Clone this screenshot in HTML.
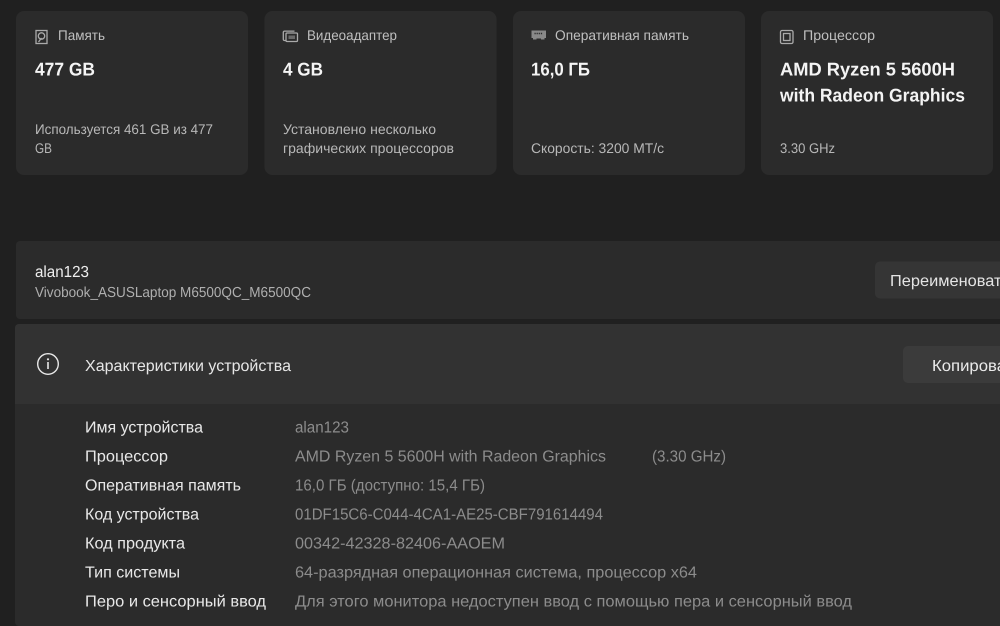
<!DOCTYPE html>
<html lang="ru">
<head>
<meta charset="utf-8">
<title>Характеристики устройства</title>
<style>
html,body{margin:0;padding:0;width:1000px;height:626px;overflow:hidden;background:#202020}
svg{display:block;filter:blur(.35px)}
text{font-family:"Liberation Sans",sans-serif;font-size:14px;text-rendering:geometricPrecision}
.t{fill:#bfbfbf;font-size:14px}
.b{fill:#f4f4f4;font-size:18.5px;font-weight:700}
.s{fill:#b8b8b8;font-size:14px}
.l{fill:#e8e8e8;font-size:16px}
.v{fill:#8c8c8c;font-size:16px}
.ic{fill:none;stroke:#aaaaaa;stroke-width:1.3}
</style>
</head>
<body>
<svg width="1000" height="626" viewBox="0 0 1000 626" xmlns="http://www.w3.org/2000/svg">
<rect width="1000" height="626" fill="#202020"/>

<!-- Cards -->
<rect x="16" y="11" width="232" height="164" rx="8" fill="#2b2b2b"/>
<rect x="264.500" y="11" width="232" height="164" rx="8" fill="#2b2b2b"/>
<rect x="513" y="11" width="232" height="164" rx="8" fill="#2b2b2b"/>
<rect x="761" y="11" width="232" height="164" rx="8" fill="#2b2b2b"/>

<!-- Storage icon -->
<g class="ic">
<rect x="36" y="30.500" width="11" height="13"/>
<circle cx="41.500" cy="36" r="3.200"/>
<path d="M38.500 42l3-4"/>
</g>
<text class="t" x="58" y="40" textLength="47" lengthAdjust="spacingAndGlyphs">Память</text>
<text class="b" x="35" y="75.500" textLength="60" lengthAdjust="spacingAndGlyphs">477 GB</text>
<text class="s" x="35" y="134" textLength="178" lengthAdjust="spacingAndGlyphs">Используется 461 GB из 477</text>
<text class="s" x="35" y="153" textLength="17" lengthAdjust="spacingAndGlyphs">GB</text>

<!-- GPU icon -->
<g class="ic">
<path d="M285.500 40.500h-1a1.200 1.200 0 0 1-1.200-1.200v-7a1.200 1.200 0 0 1 1.200-1.200h10"/>
<rect x="286" y="33" width="11.500" height="8.500" rx="1"/>
<rect x="288.500" y="35.500" width="6.500" height="3.500" fill="#aaaaaa" stroke="none" opacity=".5"/>
</g>
<text class="t" x="307" y="40" textLength="90" lengthAdjust="spacingAndGlyphs">Видеоадаптер</text>
<text class="b" x="283" y="75.500" textLength="40" lengthAdjust="spacingAndGlyphs">4 GB</text>
<text class="s" x="283" y="134" textLength="153" lengthAdjust="spacingAndGlyphs">Установлено несколько</text>
<text class="s" x="283" y="153" textLength="171" lengthAdjust="spacingAndGlyphs">графических процессоров</text>

<!-- RAM icon -->
<path d="M531.500 30.500h14.500v7.500h-1.500v1.500h-3.500v-1h-4.500v1h-3.500v-1.500h-1.500z" fill="#aaaaaa" opacity=".75"/>
<path d="M534.500 33.500h8.500" stroke="#2b2b2b" stroke-width="1.500" stroke-dasharray="1.200 .9" fill="none"/>
<text class="t" x="555" y="40" textLength="134" lengthAdjust="spacingAndGlyphs">Оперативная память</text>
<text class="b" x="531" y="75.500" textLength="59" lengthAdjust="spacingAndGlyphs">16,0 ГБ</text>
<text class="s" x="531" y="153" textLength="133" lengthAdjust="spacingAndGlyphs">Скорость: 3200 MT/с</text>

<!-- CPU icon -->
<g class="ic">
<rect x="780.500" y="30.500" width="12.500" height="13" rx="1.500"/>
<rect x="783.500" y="33.500" width="6.500" height="7"/>
</g>
<text class="t" x="803" y="40" textLength="72" lengthAdjust="spacingAndGlyphs">Процессор</text>
<text class="b" x="780" y="75.500" textLength="175" lengthAdjust="spacingAndGlyphs">AMD Ryzen 5 5600H</text>
<text class="b" x="780" y="101.500" textLength="185" lengthAdjust="spacingAndGlyphs">with Radeon Graphics</text>
<text class="s" x="780" y="153" textLength="55" lengthAdjust="spacingAndGlyphs">3.30 GHz</text>

<!-- Device name bar -->
<rect x="16" y="241" width="1000" height="78" rx="4" fill="#2b2b2b"/>
<text x="35" y="277" fill="#eeeeee" style="font-size:16px" textLength="54" lengthAdjust="spacingAndGlyphs">alan123</text>
<text x="35" y="297" fill="#afafaf" style="font-size:14.500px" textLength="276" lengthAdjust="spacingAndGlyphs">Vivobook_ASUSLaptop M6500QC_M6500QC</text>
<rect x="875" y="261.500" width="140" height="37" rx="5" fill="#353535"/>
<text x="890" y="286" fill="#e4e4e4" style="font-size:16px" textLength="120" lengthAdjust="spacingAndGlyphs">Переименовать</text>

<!-- Spec header -->
<rect x="15" y="324" width="1000" height="302" rx="4" fill="#2b2b2b"/>
<path d="M15 404v-76a4 4 0 0 1 4-4h981v80z" fill="#323232"/>
<circle cx="48" cy="364" r="10.300" fill="none" stroke="#e8e8e8" stroke-width="1.400"/>
<rect x="47.200" y="362" width="1.600" height="7" fill="#e8e8e8"/>
<circle cx="48" cy="359.300" r="1.100" fill="#e8e8e8"/>
<text x="85" y="371" fill="#e6e6e6" style="font-size:16px" textLength="206" lengthAdjust="spacingAndGlyphs">Характеристики устройства</text>
<rect x="903" y="346" width="120" height="37" rx="5" fill="#3b3b3b"/>
<text x="932" y="371" fill="#eaeaea" style="font-size:16px" textLength="90" lengthAdjust="spacingAndGlyphs">Копировать</text>

<!-- Spec rows -->
<text class="l" x="85" y="432.500" textLength="118" lengthAdjust="spacingAndGlyphs">Имя устройства</text>
<text class="v" x="295" y="432.500" textLength="54" lengthAdjust="spacingAndGlyphs">alan123</text>

<text class="l" x="85" y="461.500" textLength="83" lengthAdjust="spacingAndGlyphs">Процессор</text>
<text class="v" x="295" y="461.500" textLength="311" lengthAdjust="spacingAndGlyphs">AMD Ryzen 5 5600H with Radeon Graphics</text>
<text class="v" x="652" y="461.500" textLength="74" lengthAdjust="spacingAndGlyphs">(3.30 GHz)</text>

<text class="l" x="85" y="490.500" textLength="156" lengthAdjust="spacingAndGlyphs">Оперативная память</text>
<text class="v" x="295" y="490.500" textLength="190" lengthAdjust="spacingAndGlyphs">16,0 ГБ (доступно: 15,4 ГБ)</text>

<text class="l" x="85" y="519.500" textLength="114" lengthAdjust="spacingAndGlyphs">Код устройства</text>
<text class="v" x="295" y="519.500" textLength="308" lengthAdjust="spacingAndGlyphs">01DF15C6-C044-4CA1-AE25-CBF791614494</text>

<text class="l" x="85" y="548.500" textLength="100" lengthAdjust="spacingAndGlyphs">Код продукта</text>
<text class="v" x="295" y="548.500" textLength="210" lengthAdjust="spacingAndGlyphs">00342-42328-82406-AAOEM</text>

<text class="l" x="85" y="577.500" textLength="95" lengthAdjust="spacingAndGlyphs">Тип системы</text>
<text class="v" x="295" y="577.500" textLength="402" lengthAdjust="spacingAndGlyphs">64-разрядная операционная система, процессор x64</text>

<text class="l" x="85" y="606.500" textLength="181" lengthAdjust="spacingAndGlyphs">Перо и сенсорный ввод</text>
<text class="v" x="295" y="606.500" textLength="557" lengthAdjust="spacingAndGlyphs">Для этого монитора недоступен ввод с помощью пера и сенсорный ввод</text>
</svg>
</body>
</html>
